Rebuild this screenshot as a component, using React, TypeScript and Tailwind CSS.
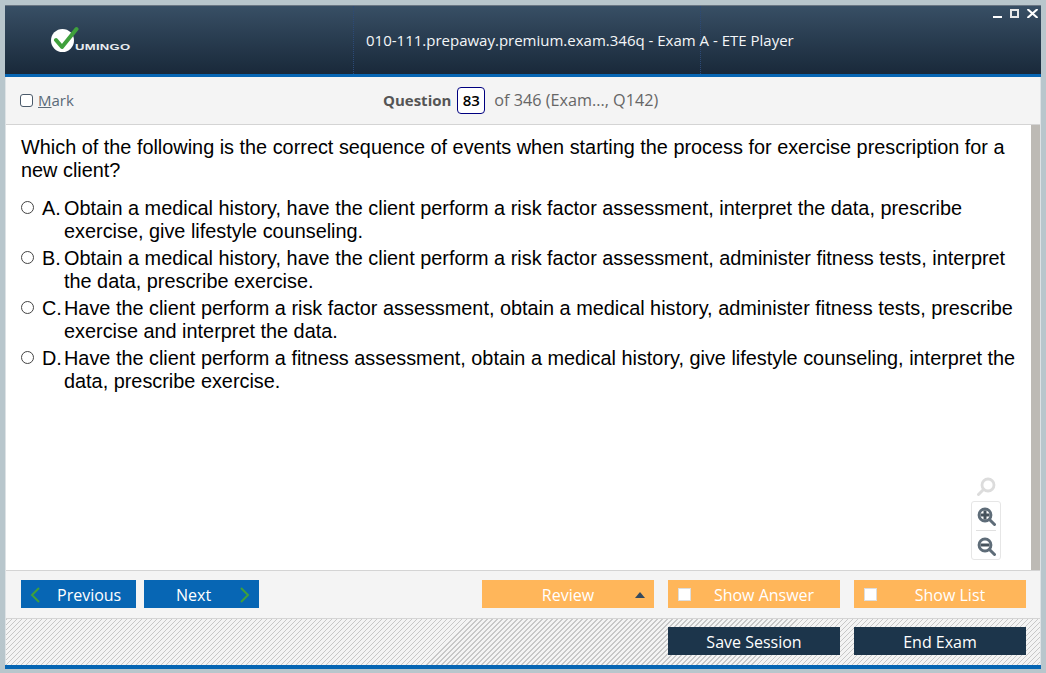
import React from "react";

const uiFont = "font-['Open_Sans','Noto_Sans',sans-serif]";
const orangeBtn =
  "relative flex h-7 w-[172px] items-center justify-center bg-[#ffb65a] pt-px text-base text-white";
const darkBtn =
  "flex h-7 w-[172px] items-center justify-center bg-[#1c354b] pt-px text-base text-white";
const blueBtn =
  "flex h-7 w-[115px] items-center bg-[#0766b4] pt-px text-base text-white";

const options = [
  {
    letter: "A.",
    text: "Obtain a medical history, have the client perform a risk factor assessment, interpret the data, prescribe exercise, give lifestyle counseling.",
  },
  {
    letter: "B.",
    text: "Obtain a medical history, have the client perform a risk factor assessment, administer fitness tests, interpret the data, prescribe exercise.",
  },
  {
    letter: "C.",
    text: "Have the client perform a risk factor assessment, obtain a medical history, administer fitness tests, prescribe exercise and interpret the data.",
  },
  {
    letter: "D.",
    text: "Have the client perform a fitness assessment, obtain a medical history, give lifestyle counseling, interpret the data, prescribe exercise.",
  },
];

const Logo = () => (
  <div className="flex items-end">
    <svg width="28" height="26" viewBox="0 0 28 26">
      <circle cx="11.5" cy="14.5" r="11.5" fill="#fff" />
      <path
        d="M5 14 L11 21 L25.5 3"
        fill="none"
        stroke="#3fa03c"
        strokeWidth="4"
        strokeLinecap="round"
        strokeLinejoin="round"
      />
    </svg>
    <span className="mb-[-1px] ml-[-4px] origin-left font-['Liberation_Sans',sans-serif] text-[9.5px] leading-[12px] font-bold tracking-[0.2px] text-[#e8ecef] [transform:scaleX(1.38)]">
      UMINGO
    </span>
  </div>
);

const Magnifier = ({ sign, color }: { sign?: "plus" | "minus"; color: string }) => (
  <svg width="19" height="19" viewBox="0 0 19 19">
    <circle cx="8" cy="8" r="6" fill="none" stroke={color} strokeWidth="2.8" />
    <path d="M12.5 12.5 L17.5 17.5" stroke={color} strokeWidth="3" strokeLinecap="round" />
    {sign && <path d="M3.5 8 H12.5" stroke="#46525c" strokeWidth="3" />}
    {sign === "plus" && <path d="M8 3.5 V12.5" stroke="#46525c" strokeWidth="3" />}
  </svg>
);

const Header = () => (
  <div className="relative flex h-[69px] items-center border-t border-t-[#6a7683] bg-gradient-to-b from-[#384f65] to-[#19293a]">
    <div className="mt-[-2px] ml-[46px] w-[302px]">
      <Logo />
    </div>
    <div className="flex h-full w-[348px] items-center border-x border-dotted border-x-[#2c4a78] pl-[12px]">
      <span className={`${uiFont} text-[15px] font-medium whitespace-nowrap text-[#f4f6f8]`}>
        010-111.prepaway.premium.exam.346q - Exam A - ETE Player
      </span>
    </div>
    <div className="absolute top-[3px] right-[3px] flex items-start">
      <div className="mt-[7px] h-[2px] w-[9px] bg-white" />
      <div className="ml-[8px] h-[9px] w-[9px] border-2 border-[#e8e8e8]" />
      <svg className="ml-[8px]" width="11" height="9" viewBox="0 0 11 9">
        <path d="M0.5 0 L10.5 9 M10.5 0 L0.5 9" stroke="#fff" strokeWidth="2" />
      </svg>
    </div>
  </div>
);

const Toolbar = () => (
  <div className={`${uiFont} relative flex h-[48px] items-center border-b border-b-[#d4d4d4] bg-[#f4f4f4] pl-[14px]`}>
    <div className="flex items-center gap-[5px]">
      <div className="h-[13px] w-[13px] rounded-[3px] border border-[#4a5a6a] bg-white" />
      <span className="text-[15px] text-[#5a6a78]">
        <span className="underline">M</span>ark
      </span>
    </div>
    <div className="absolute left-[377px] flex items-center text-[16.2px] text-[#666]">
      <span className="text-[15px] font-bold text-[#555]">Question</span>
      <span className="ml-[6px] flex h-[27px] w-[28px] items-center justify-center rounded-[4px] border border-[#000080] bg-white text-[15px] font-semibold text-black">
        83
      </span>
      <span className="ml-[9px]">of 346 (Exam..., Q142)</span>
    </div>
  </div>
);

const Question = () => (
  <div className="flex h-[445px]">
    <div className="relative flex-1 bg-white pt-[11px] pr-[10px] pl-[15px] font-['Liberation_Sans',sans-serif] text-[19.86px] leading-[23px] text-black">
      <p>
        Which of the following is the correct sequence of events when starting the process for exercise prescription for a new client?
      </p>
      <div className="mt-[15px] flex flex-col gap-[4px]">
        {options.map((o) => (
          <div key={o.letter} className="flex">
            <div className="mt-[4px] h-[13px] w-[13px] shrink-0 rounded-full border border-[#444] bg-white" />
            <span className="ml-[8px] w-[22px] shrink-0">{o.letter}</span>
            <span>{o.text}</span>
          </div>
        ))}
      </div>
      <div className="absolute top-[352px] right-[30px] flex flex-col items-center">
        <div className="scale-x-[-1]">
          <Magnifier color="#dcdcdc" />
        </div>
        <div className="mt-[5px] flex h-[59px] w-[30px] flex-col items-center rounded-[3px] border border-[#e6e6e6] pt-[5px]">
          <Magnifier sign="plus" color="#5e6c78" />
          <div className="mt-[4px] mb-[6px] h-px w-[20px] bg-[#e0e0e0]" />
          <Magnifier sign="minus" color="#5e6c78" />
        </div>
      </div>
    </div>
    <div className="w-[9px] bg-[#bdbab5]" />
  </div>
);

const ButtonRow = () => (
  <div className={`${uiFont} flex h-[48px] items-center border-t border-t-[#d4d4d4] bg-[#f4f4f4] pr-[14px] pb-[1px] pl-[15px]`}>
    <div className={`${blueBtn} gap-[17px] pl-[9px]`}>
      <svg width="10" height="16" viewBox="0 0 10 16">
        <path d="M9 1 L2 8 L9 15" fill="none" stroke="#3fa03c" strokeWidth="2" />
      </svg>
      <span>Previous</span>
    </div>
    <div className={`${blueBtn} ml-[8px] justify-between pr-[9px] pl-[32px]`}>
      <span>Next</span>
      <svg width="10" height="16" viewBox="0 0 10 16">
        <path d="M1 1 L8 8 L1 15" fill="none" stroke="#3fa03c" strokeWidth="2" />
      </svg>
    </div>
    <div className={`${orangeBtn} ml-auto`}>
      <span>Review</span>
      <div className="absolute right-[9px] h-0 w-0 border-x-[5px] border-b-[6px] border-x-transparent border-b-[#34495e]" />
    </div>
    <div className={`${orangeBtn} ml-[14px]`}>
      <div className="absolute left-[10px] h-[13px] w-[13px] border border-[#ddd] bg-white" />
      <span className="pl-[20px]">Show Answer</span>
    </div>
    <div className={`${orangeBtn} ml-[14px]`}>
      <div className="absolute left-[10px] h-[13px] w-[13px] border border-[#ddd] bg-white" />
      <span className="pl-[20px]">Show List</span>
    </div>
  </div>
);

const BottomRow = () => (
  <div className={`${uiFont} flex h-[47px] items-start justify-end gap-[14px] border-t border-t-[#d4d4d4] bg-[repeating-linear-gradient(135deg,#c8c8c8_0px,#c8c8c8_1px,#f4f4f4_1px,#f4f4f4_3.54px)] pt-[8px] pr-[14px]`}>
    <div className={darkBtn}>Save Session</div>
    <div className={darkBtn}>End Exam</div>
  </div>
);

export default function App() {
  return (
    <div className="h-[673px] w-[1046px] overflow-hidden bg-[#b8c6cc] pt-[5px] pl-[5px]">
      <div className="w-[1036px] bg-white">
        <Header />
        <div className="h-[3px] bg-[#0766b4]" />
        <div className="border-x border-x-[#dde2e5]">
          <Toolbar />
          <Question />
          <ButtonRow />
          <BottomRow />
        </div>
        <div className="h-[4px] bg-[#0766b4]" />
      </div>
    </div>
  );
}
